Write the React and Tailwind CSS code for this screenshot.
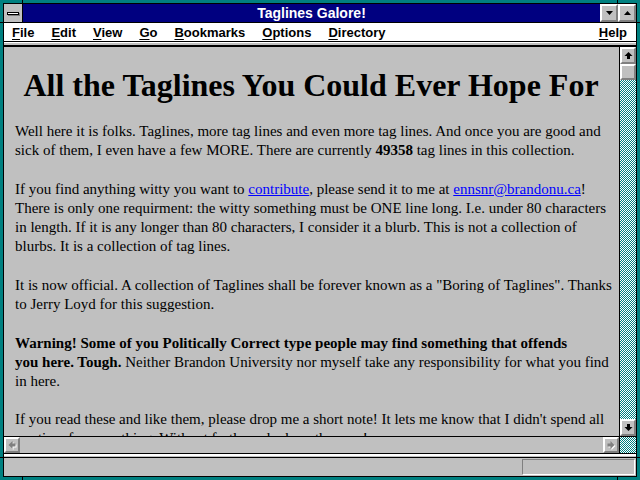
const bevel = 'bg-[#c0c0c0] border-t-2 border-l-2 border-t-white border-l-white border-b-2 border-r-2 border-b-[#808080] border-r-[#808080]'
const dither = 'bg-[repeating-conic-gradient(#008080_0%_25%,#ffffff_0%_50%)] bg-[length:2px_2px]'

const ArrowUp = ({ fill = '#000' }) => (
  <svg width="9" height="9" viewBox="0 0 9 9">
    <path d="M4.5 1 L8.5 5 L6 5 L6 8 L3 8 L3 5 L0.5 5 Z" fill={fill} />
  </svg>
)

const ArrowDown = ({ fill = '#000' }) => (
  <svg width="9" height="9" viewBox="0 0 9 9">
    <path d="M4.5 8 L8.5 4 L6 4 L6 1 L3 1 L3 4 L0.5 4 Z" fill={fill} />
  </svg>
)

const ArrowLeft = () => (
  <svg width="10" height="10" viewBox="0 0 10 10">
    <path d="M1.5 5 L5.5 1 L5.5 3.5 L8.5 3.5 L8.5 6.5 L5.5 6.5 L5.5 9 Z" fill="#ffffff" transform="translate(1 1)" />
    <path d="M1.5 5 L5.5 1 L5.5 3.5 L8.5 3.5 L8.5 6.5 L5.5 6.5 L5.5 9 Z" fill="#808080" />
  </svg>
)

const ArrowRight = () => (
  <svg width="10" height="10" viewBox="0 0 10 10">
    <path d="M8.5 5 L4.5 1 L4.5 3.5 L1.5 3.5 L1.5 6.5 L4.5 6.5 L4.5 9 Z" fill="#ffffff" transform="translate(1 1)" />
    <path d="M8.5 5 L4.5 1 L4.5 3.5 L1.5 3.5 L1.5 6.5 L4.5 6.5 L4.5 9 Z" fill="#808080" />
  </svg>
)

const menus = ['File', 'Edit', 'View', 'Go', 'Bookmarks', 'Options', 'Directory']

const MenuItem = ({ label }) => (
  <span>
    <span className="underline underline-offset-2">{label[0]}</span>
    {label.slice(1)}
  </span>
)

const Link = ({ children }) => <span className="text-[#0000ff] underline">{children}</span>

export default function App() {
  return (
    <div className="relative w-[640px] h-[480px] bg-[#008080] p-[3px] overflow-hidden">
      {/* frame resize marks */}
      <div className="absolute left-[22px] top-0 w-px h-[3px] bg-black" />
      <div className="absolute left-[617px] top-0 w-px h-[3px] bg-black" />
      <div className="absolute left-[22px] bottom-0 w-px h-[3px] bg-black" />
      <div className="absolute left-[617px] bottom-0 w-px h-[3px] bg-black" />
      <div className="absolute left-0 top-[22px] w-[3px] h-px bg-black" />
      <div className="absolute right-0 top-[22px] w-[3px] h-px bg-black" />
      <div className="absolute left-0 top-[457px] w-[3px] h-px bg-black" />
      <div className="absolute right-0 top-[457px] w-[3px] h-px bg-black" />

      <div className="h-full border border-black flex flex-col bg-[#c0c0c0]">
        {/* title bar */}
        <div className="h-[19px] flex border-b border-black shrink-0">
          <div className="w-[19px] border-r border-black bg-[#c0c0c0] flex items-center justify-center">
            <div className="w-[12px] h-[3px] bg-white border border-black shadow-[1px_1px_0_#808080]" />
          </div>
          <div className="flex-1 bg-[#000080] flex items-center justify-center text-white font-bold text-[14px] font-['Liberation_Sans',Arial,sans-serif] leading-none">
            Taglines Galore!
          </div>
          <div className={`w-[18px] border-l border-black flex items-center justify-center ${bevel}`}>
            <svg width="7" height="4" viewBox="0 0 7 4"><path d="M0 0 L7 0 L3.5 4 Z" fill="#000" /></svg>
          </div>
          <div className={`w-[18px] border-l border-black flex items-center justify-center ${bevel}`}>
            <svg width="7" height="4" viewBox="0 0 7 4"><path d="M0 4 L7 4 L3.5 0 Z" fill="#000" /></svg>
          </div>
        </div>

        {/* menu bar */}
        <div className="h-[19px] shrink-0 bg-white border-b border-black flex items-center pl-[8px] pr-[9px] gap-[17px] text-[13px] font-bold text-black font-['Liberation_Sans',Arial,sans-serif] leading-none">
          {menus.map((m) => (
            <MenuItem key={m} label={m} />
          ))}
          <span className="ml-auto">
            <MenuItem label="Help" />
          </span>
        </div>

        {/* collapsed toolbar strip */}
        <div className="h-[5px] shrink-0 border-t border-white bg-[#c0c0c0] border-b-2 border-b-black" />

        {/* main area */}
        <div className="flex-1 flex min-h-0">
          <div className="flex-1 flex flex-col min-w-0">
            <div className="flex-1 overflow-hidden pl-[11px] pr-[4px] pt-[20px] text-black font-['Liberation_Serif','Times_New_Roman',serif] text-[15px] leading-[19px] whitespace-nowrap">
              <h1 className="text-center font-bold text-[32px] leading-[36px] mb-[19px] pr-[8px]">
                All the Taglines You Could Ever Hope For
              </h1>
              <p className="mb-[20px]">
                Well here it is folks. Taglines, more tag lines and even more tag lines. And once you are good and
                <br />
                sick of them, I even have a few MORE. There are currently <b>49358</b> tag lines in this collection.
              </p>
              <p className="mb-[20px]">
                If you find anything witty you want to <Link>contribute</Link>, please send it to me at <Link>ennsnr@brandonu.ca</Link>!
                <br />
                There is only one requirment: the witty something must be ONE line long. I.e. under 80 characters
                <br />
                in length. If it is any longer than 80 characters, I consider it a blurb. This is not a collection of
                <br />
                blurbs. It is a collection of tag lines.
              </p>
              <p className="mb-[20px]">
                It is now official. A collection of Taglines shall be forever known as a "Boring of Taglines". Thanks
                <br />
                to Jerry Loyd for this suggestion.
              </p>
              <p className="mb-[19px]">
                <b>
                  Warning! Some of you Politically Correct type people may find something that offends
                  <br />
                  you here. Tough.
                </b>{' '}
                Neither Brandon University nor myself take any responsibility for what you find
                <br />
                in here.
              </p>
              <p>
                If you read these and like them, please drop me a short note! It lets me know that I didn't spend all
                <br />
                my time for something. Without further ado, here they are!
              </p>
            </div>
            {/* horizontal scrollbar */}
            <div className="h-[17px] shrink-0 border-t border-black flex bg-[#c0c0c0]">
              <div className={`w-[16px] border-r border-black flex items-center justify-center ${bevel}`}>
                <ArrowLeft />
              </div>
              <div className="flex-1" />
              <div className={`w-[16px] border-l border-black flex items-center justify-center ${bevel}`}>
                <ArrowRight />
              </div>
            </div>
          </div>

          {/* vertical scrollbar */}
          <div className="w-[17px] shrink-0 border-l border-black flex flex-col">
            <div className={`h-[17px] border-b border-black flex items-center justify-center ${bevel}`}>
              <ArrowUp />
            </div>
            <div className={`h-[16px] border-b border-black ${bevel}`} />
            <div className={`flex-1 ${dither}`} />
            <div className={`h-[17px] border-t border-black flex items-center justify-center ${bevel}`}>
              <ArrowDown />
            </div>
            <div className={`h-[17px] border-t border-black ${dither}`} />
          </div>
        </div>

        {/* separator strip */}
        <div className="h-[5px] shrink-0 border-t border-black bg-[#c0c0c0] border-b border-b-black shadow-[inset_0_2px_0_#ffffff]" />

        {/* status bar */}
        <div className="h-[18px] shrink-0 flex items-center justify-end pr-[1px] bg-[#c0c0c0]">
          <div className="w-[113px] h-[16px] border-t border-l border-[#808080] border-b border-r border-b-white border-r-white" />
        </div>
      </div>
    </div>
  )
}
